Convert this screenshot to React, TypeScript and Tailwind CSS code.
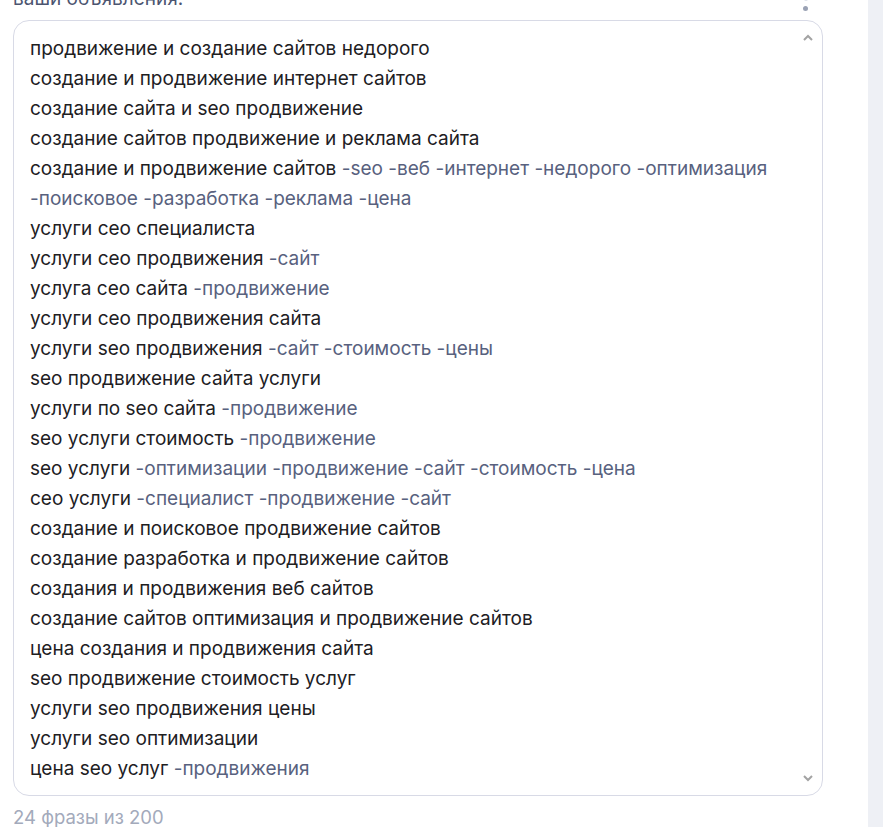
import React from "react";

type Line = { t: string; m?: string };

const lines: Line[] = [
  { t: "продвижение и создание сайтов недорого" },
  { t: "создание и продвижение интернет сайтов" },
  { t: "создание сайта и seo продвижение" },
  { t: "создание сайтов продвижение и реклама сайта" },
  { t: "создание и продвижение сайтов", m: "-seo -веб -интернет -недорого -оптимизация -поисковое -разработка -реклама -цена" },
  { t: "услуги сео специалиста" },
  { t: "услуги сео продвижения", m: "-сайт" },
  { t: "услуга сео сайта", m: "-продвижение" },
  { t: "услуги сео продвижения сайта" },
  { t: "услуги seo продвижения", m: "-сайт -стоимость -цены" },
  { t: "seo продвижение сайта услуги" },
  { t: "услуги по seo сайта", m: "-продвижение" },
  { t: "seo услуги стоимость", m: "-продвижение" },
  { t: "seo услуги", m: "-оптимизации -продвижение -сайт -стоимость -цена" },
  { t: "сео услуги", m: "-специалист -продвижение -сайт" },
  { t: "создание и поисковое продвижение сайтов" },
  { t: "создание разработка и продвижение сайтов" },
  { t: "создания и продвижения веб сайтов" },
  { t: "создание сайтов оптимизация и продвижение сайтов" },
  { t: "цена создания и продвижения сайта" },
  { t: "seo продвижение стоимость услуг" },
  { t: "услуги seo продвижения цены" },
  { t: "услуги seo оптимизации" },
  { t: "цена seo услуг", m: "-продвижения" },
];

export default function App() {
  return (
    <div
      className="flex h-[827px] w-[883px] overflow-hidden bg-white"
      style={{ fontFamily: "Inter, 'Noto Sans', sans-serif" }}
    >
      <div className="relative flex w-[868px] flex-col">
        <div className="absolute right-[60px] top-[-3px] flex flex-col items-center gap-[5px]">
          <div className="h-[4px] w-[4px] rounded-full bg-[#dfe3ea]" />
          <div className="h-[5px] w-[5px] rounded-full bg-[#9aa2b4]" />
        </div>
        <div className="mt-[-12px] pl-[13px] text-[19px] leading-[22px] text-[#4c5570]">
          ваши объявления.
        </div>
        <div className="relative mt-[10px] ml-[13px] w-[810px] rounded-[16px] border border-[#d8dae6] pt-[13px] pb-[11px] pl-[16px] pr-[40px] text-[19px] leading-[30px] text-[#21201f]">
          {lines.map((l, i) => (
            <div key={i}>
              {l.t}
              {l.m && <span className="text-[#58617e]"> {l.m}</span>}
            </div>
          ))}
          <svg className="absolute right-[9px] top-[13px]" width="10" height="8" viewBox="0 0 10 8">
            <path d="M1 6 L5 2 L9 6" stroke="#a3a3a3" strokeWidth="2" fill="none" />
          </svg>
          <svg className="absolute bottom-[13px] right-[9px]" width="10" height="8" viewBox="0 0 10 8">
            <path d="M1 2 L5 6 L9 2" stroke="#a3a3a3" strokeWidth="2" fill="none" />
          </svg>
        </div>
        <div className="mt-[8px] pl-[13px] text-[18.5px] leading-[26px] text-[#a3aabb]">24 фразы из 200</div>
      </div>
      <div className="h-full w-[15px] bg-[#eef0f5]" />
    </div>
  );
}
